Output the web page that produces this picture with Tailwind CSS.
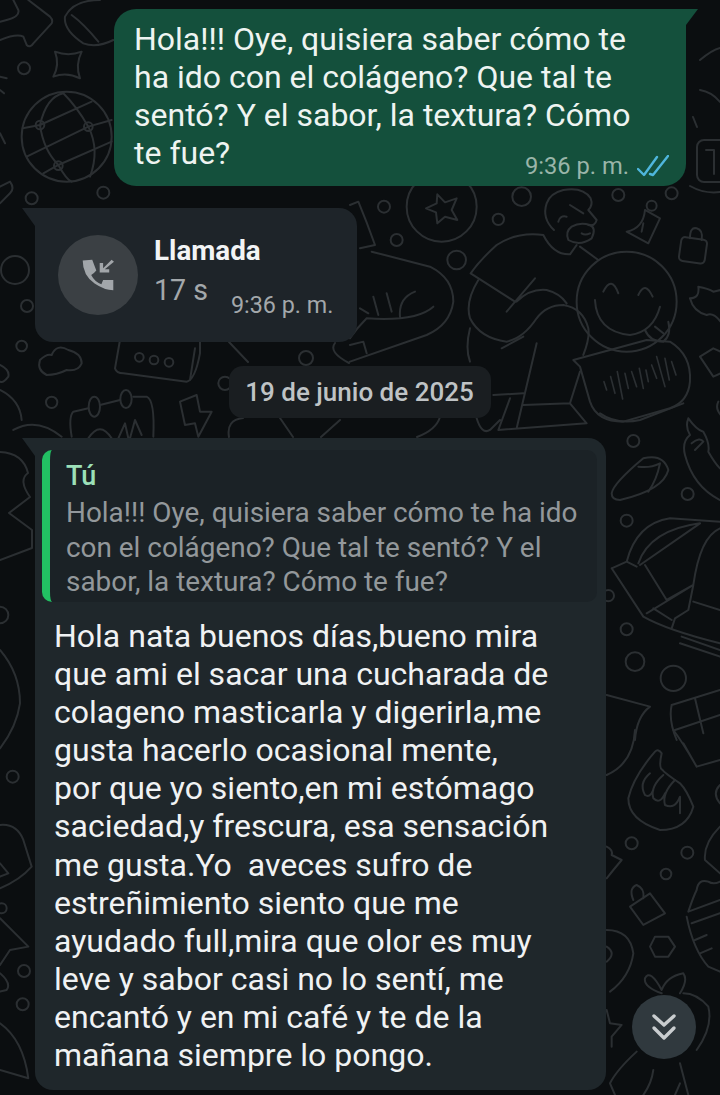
<!DOCTYPE html>
<html lang="es">
<head>
<meta charset="UTF-8">
<script src="https://cdn.jsdelivr.net/npm/@tailwindcss/browser@4"></script>
<title>Chat</title>
</head>
<body class="bg-[#0b0e10]">
<div class="relative w-[720px] h-[1095px] overflow-hidden font-['Roboto',sans-serif] bg-[#0b0e10]">

  <!-- doodle wallpaper -->
  <svg class="absolute inset-0" width="720" height="1095" viewBox="0 0 720 1095" fill="none" stroke="#2b2f32" stroke-width="2" stroke-linecap="round" stroke-linejoin="round">
    <!-- top left: arrow, star, globe -->
    <g transform="scale(.3333)" stroke-width="6">
      <path d="M0 120Q50 100 70 110L80 135Q90 145 100 130L155 70Q160 60 150 50L85 0M40 0L55 30Q60 50 20 60L0 65"/>
      <path d="M195 50Q190 90 250 130Q290 145 340 120M195 50Q220 0 300 0M215 45Q250 70 295 125"/>
      <path d="M165 155Q205 170 245 155Q225 195 240 235Q200 215 160 230Q180 195 165 155z"/>
      <circle cx="72" cy="205" r="18"/><circle cx="200" cy="410" r="135"/>
      <path d="M120 375L275 305M120 375Q140 290 190 280M120 375Q130 450 175 495Q200 540 215 545M265 380Q230 320 190 280M265 380Q300 450 270 530M80 470L265 380L335 360M175 495L335 425M175 495L130 520M68 385L120 375"/>
      <circle cx="120" cy="375" r="13"/><circle cx="265" cy="380" r="13"/><circle cx="175" cy="497" r="13"/>
      <circle cx="95" cy="595" r="18"/><circle cx="310" cy="578" r="18"/>
      <path d="M0 610L30 580Q45 565 30 545L0 560M0 230L20 235M0 270L12 280M0 400L15 430"/>
    </g>

    <!-- right of the sent bubble -->
    <path d="M700 60Q712 50 720 48M693 117L697 127M700 90Q712 92 720 102"/>
    <rect x="697" y="140" width="34" height="42" rx="7"/><path d="M706 150h8v24"/><path d="M690 186q14 8 30 6"/>

    <!-- man hugging the smiley, voice note, star -->
    <g transform="translate(350 185) scale(.3333)" stroke-width="6">
      <circle cx="275" cy="65" r="105"/><path d="M262 28L285 52L320 40L305 75L322 105L285 95L262 115L258 82L228 70L260 55z"/>
      <circle cx="102" cy="65" r="18"/><circle cx="140" cy="165" r="18"/><circle cx="320" cy="225" r="28"/><circle cx="515" cy="35" r="28"/><circle cx="445" cy="103" r="17"/><circle cx="805" cy="30" r="18"/><circle cx="965" cy="25" r="18"/>
      <path d="M612 135Q575 100 590 55Q600 25 640 15Q700 5 722 40Q730 60 715 75L740 105Q735 125 715 120M660 60L700 85M625 110Q630 90 650 95"/>
      <path d="M665 125Q645 140 655 165Q690 185 725 160Q740 130 720 120Q690 110 665 125zM695 145Q705 152 720 145"/>
      <path d="M580 150Q500 140 440 180Q390 225 362 265L495 350M580 150Q610 210 660 208L680 180M690 185L745 225"/>
      <path d="M385 285Q345 350 360 400Q390 460 470 470Q520 460 560 400Q590 360 640 360Q700 370 715 430Q720 460 700 510M500 350Q540 310 590 315Q630 325 650 355M555 280L470 380M455 490L520 455M360 430Q345 490 360 530"/>
      <path d="M560 475L500 730M520 660L660 655L710 715L445 735L480 640M430 630L520 625M690 560L660 655M380 700Q395 750 420 735L450 705"/>
      <circle cx="830" cy="350" r="150"/><path d="M760 320Q785 270 805 325M865 330Q885 285 908 335M735 345Q740 440 840 450Q910 440 930 365M885 435Q900 470 940 470Q965 450 955 410M915 425L940 445"/>
      <path d="M670 525L890 465L960 470Q1025 510 1020 590Q1015 650 960 670L820 710Q740 710 720 650L690 545z"/>
      <path stroke-width="5" d="M762 590L770 615M782 575L795 625M802 560L818 642M825 565L835 610M845 560L860 605M868 550L880 610M888 555L895 590M905 540L920 580M920 515L945 605M945 520L958 585M965 530L978 570"/>
      <path d="M65 200L240 245Q310 280 310 350Q300 420 230 450L0 530M250 365Q200 410 50 400Q20 430 0 460M70 335L85 390M110 325L125 380M150 395Q145 340 195 320M0 60L25 50Q50 110 75 180L30 190M30 370L55 385M0 480L40 470L50 505"/>
      <circle cx="905" cy="62" r="15"/><path d="M885 75L930 100L895 175L830 140Q880 130 885 75zM880 115L875 140"/>
      <rect x="990" y="160" width="78" height="72" rx="12" transform="rotate(8 1030 196)"/><path d="M1020 160Q1020 125 1040 130Q1060 135 1055 165"/>
      <path d="M1020 340Q1050 340 1045 305Q1075 310 1090 320L1112 315M1020 340Q1030 380 1070 390Q1090 380 1112 410"/>
      <path d="M1050 515L1090 490L1112 500M1050 515L1090 575L1112 565M1105 650Q1095 670 1112 690"/>
    </g>

    <!-- between the call and the date chip -->
    <path d="M229 342L248 362M335 343Q328 352 349 363"/><circle cx="306" cy="358" r="7"/>
    <path d="M229 437Q226 420 243 418M280 418L293 437M340 420L321 437M440 417Q436 430 417 437"/>

    <!-- left of the date chip: cloud, card, dumbbell, bolt -->
    <g transform="translate(0 340) scale(.3333)" stroke-width="6">
      <path d="M140 105Q110 90 120 60Q140 40 155 45Q170 10 205 30Q245 40 245 70Q235 95 200 90Q170 105 140 105z"/>
      <path d="M360 0L345 85Q350 100 370 100L560 125Q585 120 600 40L600 0M585 25L570 120"/>
      <circle cx="418" cy="52" r="13"/><circle cx="462" cy="60" r="13"/><circle cx="507" cy="67" r="13"/>
      <circle cx="65" cy="18" r="16"/><circle cx="155" cy="187" r="17"/><circle cx="675" cy="130" r="20"/>
      <path d="M0 75Q30 90 25 110Q10 130 0 125M0 150Q60 180 65 240M40 270Q110 230 185 290"/>
      <path d="M215 290Q205 230 220 215L265 205M300 195L360 180M400 170L440 170Q465 180 460 290"/>
      <ellipse cx="283" cy="200" rx="17" ry="30"/><ellipse cx="378" cy="177" rx="17" ry="27"/>
      <path d="M265 295Q300 240 335 295M355 295L375 250L385 295M390 295L405 240L425 285"/>
      <path d="M540 185L590 165L600 215L635 215L595 290L585 250L555 255z"/>
    </g>

    <!-- left edge -->
    <circle cx="15" cy="270" r="14"/><circle cx="27" cy="306" r="6"/>
    <path d="M0 452Q23 453 28 473Q18 480 30 497L9 513L32 530V548L0 560"/>
    <g transform="translate(0 600) scale(.3333)" stroke-width="6">
      <circle cx="0" cy="45" r="25"/><path d="M0 150Q60 220 60 310Q50 380 0 445"/><circle cx="38" cy="530" r="18"/>
      <path d="M0 675Q50 670 70 720L95 800Q60 840 0 865M0 790L25 820L0 830"/><circle cx="5" cy="925" r="15"/>
      <path d="M0 955L85 1040L30 1050L0 1095"/><circle cx="72" cy="1113" r="18"/>
      <path d="M0 1120Q35 1150 20 1170L0 1175"/><circle cx="68" cy="1213" r="18"/>
      <path d="M0 1270Q70 1320 85 1435L0 1410"/>
    </g>

    <!-- right edge, upper -->
    <g transform="translate(600 400) scale(.3333)" stroke-width="6">
      <path d="M0 40Q50 75 120 60L250 10"/>
      <path d="M35 280Q40 250 130 175Q190 160 205 210Q190 270 60 300Q35 300 35 280zM115 200Q150 205 180 190Q170 240 145 275"/>
      <circle cx="100" cy="123" r="18"/><circle cx="263" cy="282" r="18"/><circle cx="80" cy="362" r="18"/><circle cx="80" cy="688" r="18"/><circle cx="105" cy="785" r="28"/><circle cx="220" cy="835" r="38"/><circle cx="25" cy="587" r="17"/>
      <path d="M265 55Q290 90 310 95Q330 130 325 155Q345 190 360 205M265 55Q255 80 270 105Q245 125 255 165Q280 260 360 300M275 130Q300 110 310 125L285 150"/>
      <path d="M35 505L80 485Q110 370 210 355L360 365M80 485L110 500M115 490Q150 390 300 370M120 495L300 370M35 505L130 650Q200 690 360 730M135 495L200 600L280 555M140 640L280 555L265 630L225 655L215 685M160 625L215 660M280 555Q300 410 360 385M280 605L360 630M245 710L360 750M240 730L360 770"/>
      <path d="M20 885L150 920Q110 950 105 1020M215 915L360 870M215 915Q205 960 230 1020M225 990L360 945M285 895L310 1000"/>
    </g>

    <!-- right edge, lower -->
    <g transform="translate(600 730) scale(.3333)" stroke-width="6">
      <path d="M220 0Q250 40 290 110L360 90M250 40L290 110M105 0Q100 100 20 135"/>
      <path d="M165 65Q100 140 85 205Q85 270 180 300Q260 300 280 230Q260 180 240 160Q195 130 188 120Q175 115 185 70Q175 55 165 65z"/>
      <path d="M150 130Q115 160 135 195Q150 205 160 180M190 135Q150 170 160 205Q180 225 195 190M225 150Q185 190 195 225Q225 240 240 200L240 250"/>
      <circle cx="95" cy="340" r="18"/><circle cx="262" cy="368" r="18"/><circle cx="198" cy="432" r="16"/>
      <path d="M90 530L150 490L195 550L130 585zM100 510Q85 475 110 465Q135 475 130 505"/>
      <path d="M165 620H205L225 650L205 680H165L150 650z"/>
      <path d="M290 480Q295 445 325 455Q340 465 360 455M265 545L360 510M260 560Q280 660 325 710L360 725M275 580L360 550M285 630L320 615M300 670L335 655M265 545Q280 500 290 480"/>
      <path d="M360 290Q310 340 315 390L360 430M360 165Q335 190 360 220"/>
      <path d="M20 600Q90 600 100 670Q90 740 30 785M20 650Q50 670 20 695M20 350Q40 360 35 375L65 390L40 420L20 445"/>
      <path d="M185 790Q130 770 135 745Q150 715 185 780Q200 740 250 730Q265 750 240 790M250 790Q290 790 325 830Q340 890 290 960"/>
      <path d="M110 965Q50 1020 30 1060L45 1095M160 1020Q155 1060 130 1095M240 1000L265 1095M240 1060L225 1095M20 840L30 880L65 885L35 920L35 950"/>
    </g>
  </svg>

  <div class="relative flex flex-col px-[35px] pt-[9px]">

    <!-- sent message -->
    <div class="relative self-end w-[572px] h-[177px] -mr-[1px] bg-[#14503c] rounded-[22px] rounded-tr-none pl-[20px] pt-[11px]">
      <div class="absolute top-0 right-[-12px] w-0 h-0 border-t-[16px] border-t-[#14503c] border-r-[12px] border-r-transparent"></div>
      <p class="text-[32px] leading-[38.1px] text-[#eef4f1]">Hola!!! Oye, quisiera saber cómo te<br>ha ido con el colágeno? Que tal te<br>sentó? Y el sabor, la textura? Cómo<br>te fue?</p>
      <div class="absolute right-[17px] bottom-[5px] flex items-center gap-[8px]">
        <span class="text-[23.7px] leading-[30px] text-[#9ab5a9]">9:36 p. m.</span>
        <svg width="32" height="22" viewBox="0 0 32 22" fill="none" stroke="#4fb6dc" stroke-width="2.4" stroke-linecap="round" stroke-linejoin="round"><path d="M1 14l6 6L20 2"/><path d="M13 19l3 1L31 1"/></svg>
      </div>
    </div>

    <!-- call -->
    <div class="relative w-[322px] h-[134px] mt-[22px] bg-[#1e2429] rounded-[18px] rounded-tl-none">
      <div class="absolute top-0 left-[-13px] w-0 h-0 border-t-[18px] border-t-[#1e2429] border-l-[13px] border-l-transparent"></div>
      <div class="flex h-full pt-[27px] pl-[23px]">
        <div class="w-[80px] h-[80px] rounded-full bg-[#3b4044] flex items-center justify-center">
          <svg width="34" height="34" viewBox="185 175 100 100" fill="#a2a6aa"><path d="M190 182L218 180L230 212Q222 222 215 225Q225 245 245 252L250 240L280 240L280 270Q255 270 225 250Q190 225 190 182z"/><path d="M275 180L250 205V190H240V218H268V208H255L282 186z"/></svg>
        </div>
        <div class="ml-[16px] flex flex-col">
          <span class="text-[27.8px] leading-[30px] font-bold text-[#f2f4f5] mt-[1px]">Llamada</span>
          <div class="flex mt-[9px]">
            <span class="text-[28.6px] leading-[30px] text-[#a3a8ab]">17 s</span>
            <span class="text-[23.3px] leading-[30px] text-[#a3a8ab] ml-[23px] mt-[15px]">9:36 p. m.</span>
          </div>
        </div>
      </div>
    </div>

    <!-- date -->
    <div class="self-center -ml-[1px] mt-[24px] w-[262px] h-[52px] bg-[#1a1e21] rounded-[14px] flex items-center justify-center">
      <span class="text-[26px] text-[#bfc3c5] font-medium">19 de junio de 2025</span>
    </div>

    <!-- received -->
    <div class="relative w-[571px] h-[652px] mt-[20px] bg-[#1f272b] rounded-[18px] rounded-tl-none pt-[12px]">
      <div class="absolute top-0 left-[-13px] w-0 h-0 border-t-[18px] border-t-[#1f272b] border-l-[13px] border-l-transparent"></div>
      <div class="ml-[7px] mr-[9px] h-[152px] bg-[#1b2226] rounded-[10px] border-l-[8px] border-[#22c063] pl-[16px] pt-[9px]">
        <p class="text-[27px] leading-[34px] font-medium text-[#9ce0b8]">Tú</p>
        <p class="text-[27.9px] leading-[34.5px] text-[#93989b] mt-[3px]">Hola!!! Oye, quisiera saber cómo te ha ido<br>con el colágeno? Que tal te sentó? Y el<br>sabor, la textura? Cómo te fue?</p>
      </div>
      <p class="ml-[19px] mt-[15px] text-[32px] leading-[38.1px] text-[#f0f2f3]">Hola nata buenos días,bueno mira<br>que ami el sacar una cucharada de<br>colageno masticarla y digerirla,me<br>gusta hacerlo ocasional mente,<br>por que yo siento,en mi estómago<br>saciedad,y frescura, esa sensación<br>me gusta.Yo &nbsp;aveces sufro de<br>estreñimiento siento que me<br>ayudado full,mira que olor es muy<br>leve y sabor casi no lo sentí, me<br>encantó y en mi café y te de la<br>mañana siempre lo pongo.</p>
    </div>
  </div>

  <!-- scroll down button -->
  <div class="absolute left-[632px] top-[995px] w-[64px] h-[64px] rounded-full bg-[#30393e] flex items-center justify-center">
    <svg width="26" height="28" viewBox="0 0 26 28" fill="none" stroke="#c9cdcf" stroke-width="3.4" stroke-linecap="round" stroke-linejoin="round"><path d="M3 3l10 9 10-9"/><path d="M3 15l10 10 10-10"/></svg>
  </div>
</div>
</body>
</html>
